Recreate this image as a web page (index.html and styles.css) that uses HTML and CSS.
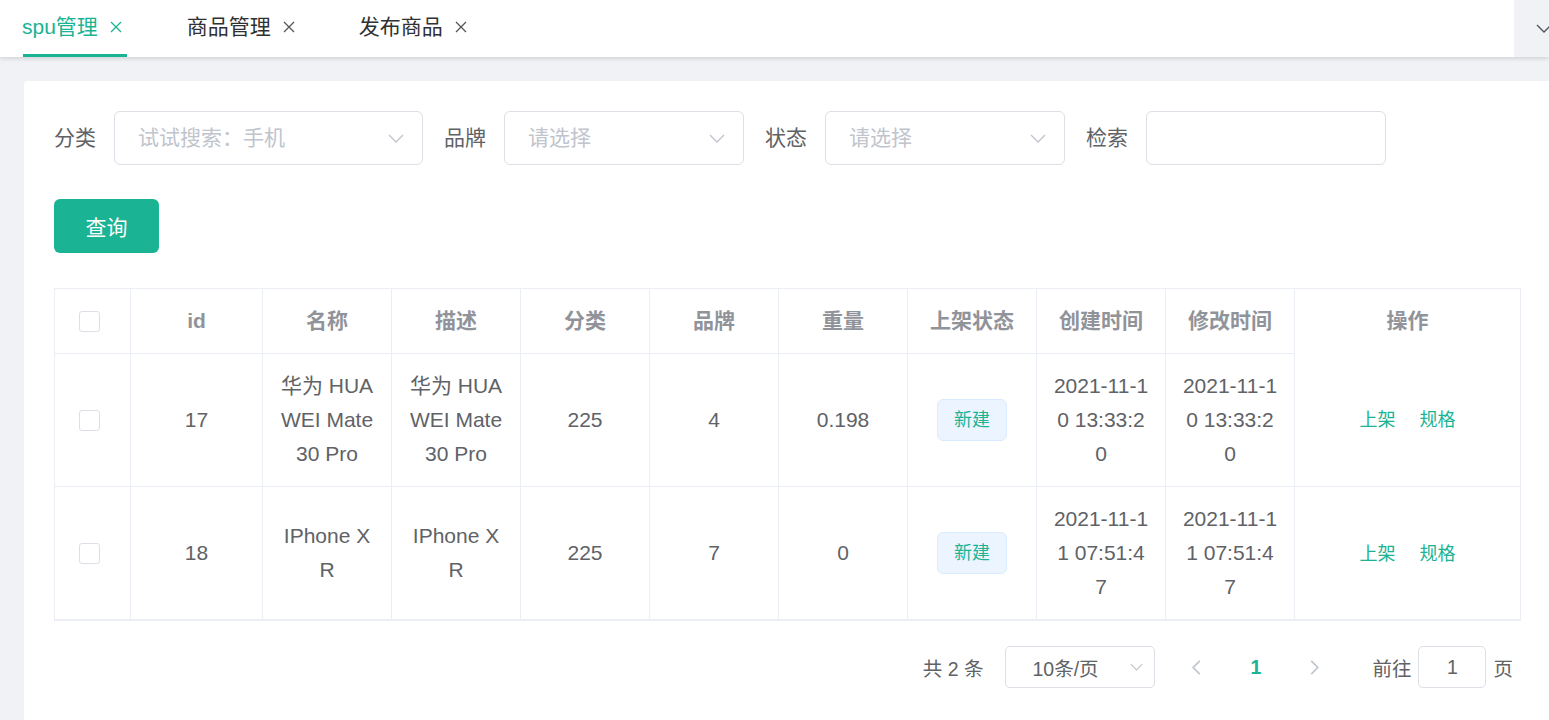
FILE: index.html
```html
<!DOCTYPE html>
<html lang="zh-CN">
<head>
<meta charset="utf-8">
<title>spu管理</title>
<link rel="stylesheet" href="styles.css">
</head>
<body>
<div class="tabbar">
  <div class="tabs">
    <div class="tab active"><span>spu管理</span><svg class="close" viewBox="0 0 12 12"><path d="M1 1L11 11M11 1L1 11"/></svg></div>
    <div class="tab"><span>商品管理</span><svg class="close" viewBox="0 0 12 12"><path d="M1 1L11 11M11 1L1 11"/></svg></div>
    <div class="tab"><span>发布商品</span><svg class="close" viewBox="0 0 12 12"><path d="M1 1L11 11M11 1L1 11"/></svg></div>
  </div>
  <div class="tab-more"><svg viewBox="0 0 16 9"><path d="M1 1L8 8L15 1"/></svg></div>
</div>
<div class="main">
  <div class="card">
    <div class="filters">
      <label class="flabel">分类</label>
      <div class="select w310"><span class="ph">试试搜索：手机</span><svg class="arrow" viewBox="0 0 16 9"><path d="M1 1L8 8L15 1"/></svg></div>
      <label class="flabel">品牌</label>
      <div class="select w240"><span class="ph">请选择</span><svg class="arrow" viewBox="0 0 16 9"><path d="M1 1L8 8L15 1"/></svg></div>
      <label class="flabel">状态</label>
      <div class="select w240"><span class="ph">请选择</span><svg class="arrow" viewBox="0 0 16 9"><path d="M1 1L8 8L15 1"/></svg></div>
      <label class="flabel">检索</label>
      <div class="select w240"></div>
    </div>
    <button class="btn">查询</button>
    <table class="grid">
      <colgroup>
        <col class="c-sel"><col class="c-id"><col class="c-std"><col class="c-std"><col class="c-std"><col class="c-std"><col class="c-std"><col class="c-std"><col class="c-std"><col class="c-std"><col class="c-ops">
      </colgroup>
      <thead>
        <tr>
          <th class="sel"><span class="cb"></span></th>
          <th>id</th><th>名称</th><th>描述</th><th>分类</th><th>品牌</th><th>重量</th><th>上架状态</th><th>创建时间</th><th>修改时间</th><th class="ops-h">操作</th>
        </tr>
      </thead>
      <tbody>
        <tr>
          <td class="sel"><span class="cb"></span></td>
          <td>17</td><td>华为 HUAWEI Mate 30 Pro</td><td>华为 HUAWEI Mate 30 Pro</td><td>225</td><td>4</td><td>0.198</td>
          <td><span class="tag">新建</span></td>
          <td>2021-11-10 13:33:20</td><td>2021-11-10 13:33:20</td>
          <td><span class="link">上架</span><span class="link">规格</span></td>
        </tr>
        <tr>
          <td class="sel"><span class="cb"></span></td>
          <td>18</td><td>IPhone X R</td><td>IPhone X R</td><td>225</td><td>7</td><td>0</td>
          <td><span class="tag">新建</span></td>
          <td>2021-11-11 07:51:47</td><td>2021-11-11 07:51:47</td>
          <td><span class="link">上架</span><span class="link">规格</span></td>
        </tr>
      </tbody>
    </table>
    <div class="pager">
      <span class="total">共 2 条</span>
      <div class="psize"><span>10条/页</span><svg class="arrow" viewBox="0 0 16 9"><path d="M1 1L8 8L15 1"/></svg></div>
      <span class="pbtn prev"><svg viewBox="0 0 9 16"><path d="M8 1L1 8L8 15"/></svg></span>
      <span class="pnum">1</span>
      <span class="pbtn next"><svg viewBox="0 0 9 16"><path d="M1 1L8 8L1 15"/></svg></span>
      <span class="jump">前往</span>
      <div class="jinput">1</div>
      <span class="jump">页</span>
    </div>
  </div>
</div>
</body>
</html>
```
FILE: styles.css
```css
* { box-sizing: border-box; }
html, body { margin: 0; padding: 0; }
body {
  background: #f0f2f5;
  font-family: "Liberation Sans", "Noto Sans CJK SC", sans-serif;
  color: #606266;
  font-size: 21px;
  height: 720px;
  overflow: hidden;
}
.tabbar {
  height: 57px;
  background: #fff;
  display: flex;
  justify-content: space-between;
  box-shadow: 0 2px 4px rgba(0, 0, 0, 0.12);
  position: relative;
  z-index: 1;
}
.tabs { display: flex; padding-left: 22px; }
.tab {
  display: flex;
  align-items: center;
  height: 57px;
  margin-right: 60px;
  padding-right: 4px;
  color: #303133;
  line-height: 24px;
  position: relative;
  padding-bottom: 3px;
}
.tab.active { color: #1ab394; padding-right: 5px; }
.tab.active::after {
  content: "";
  position: absolute;
  left: 1px; right: 0; bottom: 0;
  height: 3px;
  background: #1ab394;
}
.close { width: 12px; height: 12px; margin-left: 12px; }
.close path { stroke: currentColor; stroke-width: 1.3; fill: none; }
.tab:not(.active) .close path { stroke: #555; }
.tab-more {
  width: 35px;
  height: 57px;
  background: #f0f2f5;
  display: flex;
  align-items: center;
  padding-left: 22px;
  overflow: hidden;
}
.tab-more svg { width: 16px; height: 9px; flex: none; }
.tab-more path { stroke: #505860; stroke-width: 1.4; fill: none; }
.main { padding: 24px 0 0 24px; }
.card {
  background: #fff;
  border-radius: 4px 0 0 0;
  padding: 30px 29px 40px 30px;
  min-height: 700px;
}
.filters { display: flex; align-items: center; height: 54px; }
.flabel { line-height: 24px; color: #606266; margin-right: 18px; }
.select {
  height: 54px;
  border: 1px solid #dcdfe6;
  border-radius: 6px;
  display: flex;
  align-items: center;
  justify-content: space-between;
  padding: 0 18px 0 23px;
  margin-right: 21px;
}
.w310 { width: 309px; }
.w240 { width: 240px; }
.ph { color: #c0c4cc; line-height: 24px; }
.arrow { width: 16px; height: 9px; }
.arrow path { stroke: #c0c4cc; stroke-width: 1.4; fill: none; }
.btn {
  display: block;
  margin-top: 34px;
  width: 105px;
  height: 54px;
  border: none;
  border-radius: 6px;
  background: #1ab394;
  color: #fff;
  font-family: inherit;
  font-size: 21px;
  padding: 0;
}
.grid {
  margin-top: 35px;
  border-collapse: collapse;
  table-layout: fixed;
  width: 1466px;
  border: 1px solid #ebeef5;
  border-bottom: 2px solid #ebeef5;
}
.c-sel { width: 76px; }
.c-id { width: 132px; }
.c-std { width: 129px; }
.c-ops { width: 226px; }
.grid th, .grid td {
  border: 1px solid #ebeef5;
  padding: 15px 15px;
  line-height: 34px;
  text-align: center;
  vertical-align: middle;
  word-break: break-all;
  font-size: 21px;
}
.grid th.sel, .grid td.sel { padding: 15px 21px 15px 15px; }
.grid th { color: #909399; font-weight: bold; }
.grid td { color: #606266; }
.grid th.ops-h { border-bottom-style: hidden; }
.cb {
  display: inline-block;
  width: 21px;
  height: 21px;
  border: 1px solid #dcdfe6;
  border-radius: 3px;
  vertical-align: middle;
  background: #fff;
  position: relative;
  top: -1px;
}
.tag {
  display: inline-block;
  height: 42px;
  line-height: 40px;
  padding: 0 16px;
  font-size: 18px;
  color: #1ab394;
  background: #ecf5ff;
  border: 1px solid #d9ecff;
  border-radius: 6px;
  vertical-align: middle;
}
.link { color: #1ab394; font-size: 18px; margin: 0 12px; }
.pager {
  display: flex;
  align-items: center;
  justify-content: flex-end;
  margin-top: 25px;
  padding-right: 7px;
  font-size: 19.5px;
  height: 42px;
}
.total { margin-right: 22px; }
.psize {
  width: 150px;
  height: 42px;
  border: 1px solid #dcdfe6;
  border-radius: 5px;
  display: flex;
  align-items: center;
  justify-content: space-between;
  padding: 0 11px 0 26px;
  color: #606266;
}
.psize .arrow { width: 13px; height: 8px; }
.pbtn {
  width: 49px;
  height: 42px;
  display: flex;
  align-items: center;
  justify-content: center;
}
.pbtn svg { width: 9px; height: 15px; }
.pbtn path { stroke: #c0c4cc; stroke-width: 1.8; fill: none; }
.pbtn.prev { margin-left: 17px; }
.pbtn.next { margin-right: 33px; }
.pnum {
  width: 49px;
  margin: 0 10px;
  text-align: center;
  color: #1ab394;
  font-weight: bold;
}
.jump { color: #606266; }
.jinput {
  width: 68px;
  height: 42px;
  border: 1px solid #dcdfe6;
  border-radius: 5px;
  text-align: center;
  line-height: 40px;
  margin: 0 7px;
  color: #606266;
}
```
